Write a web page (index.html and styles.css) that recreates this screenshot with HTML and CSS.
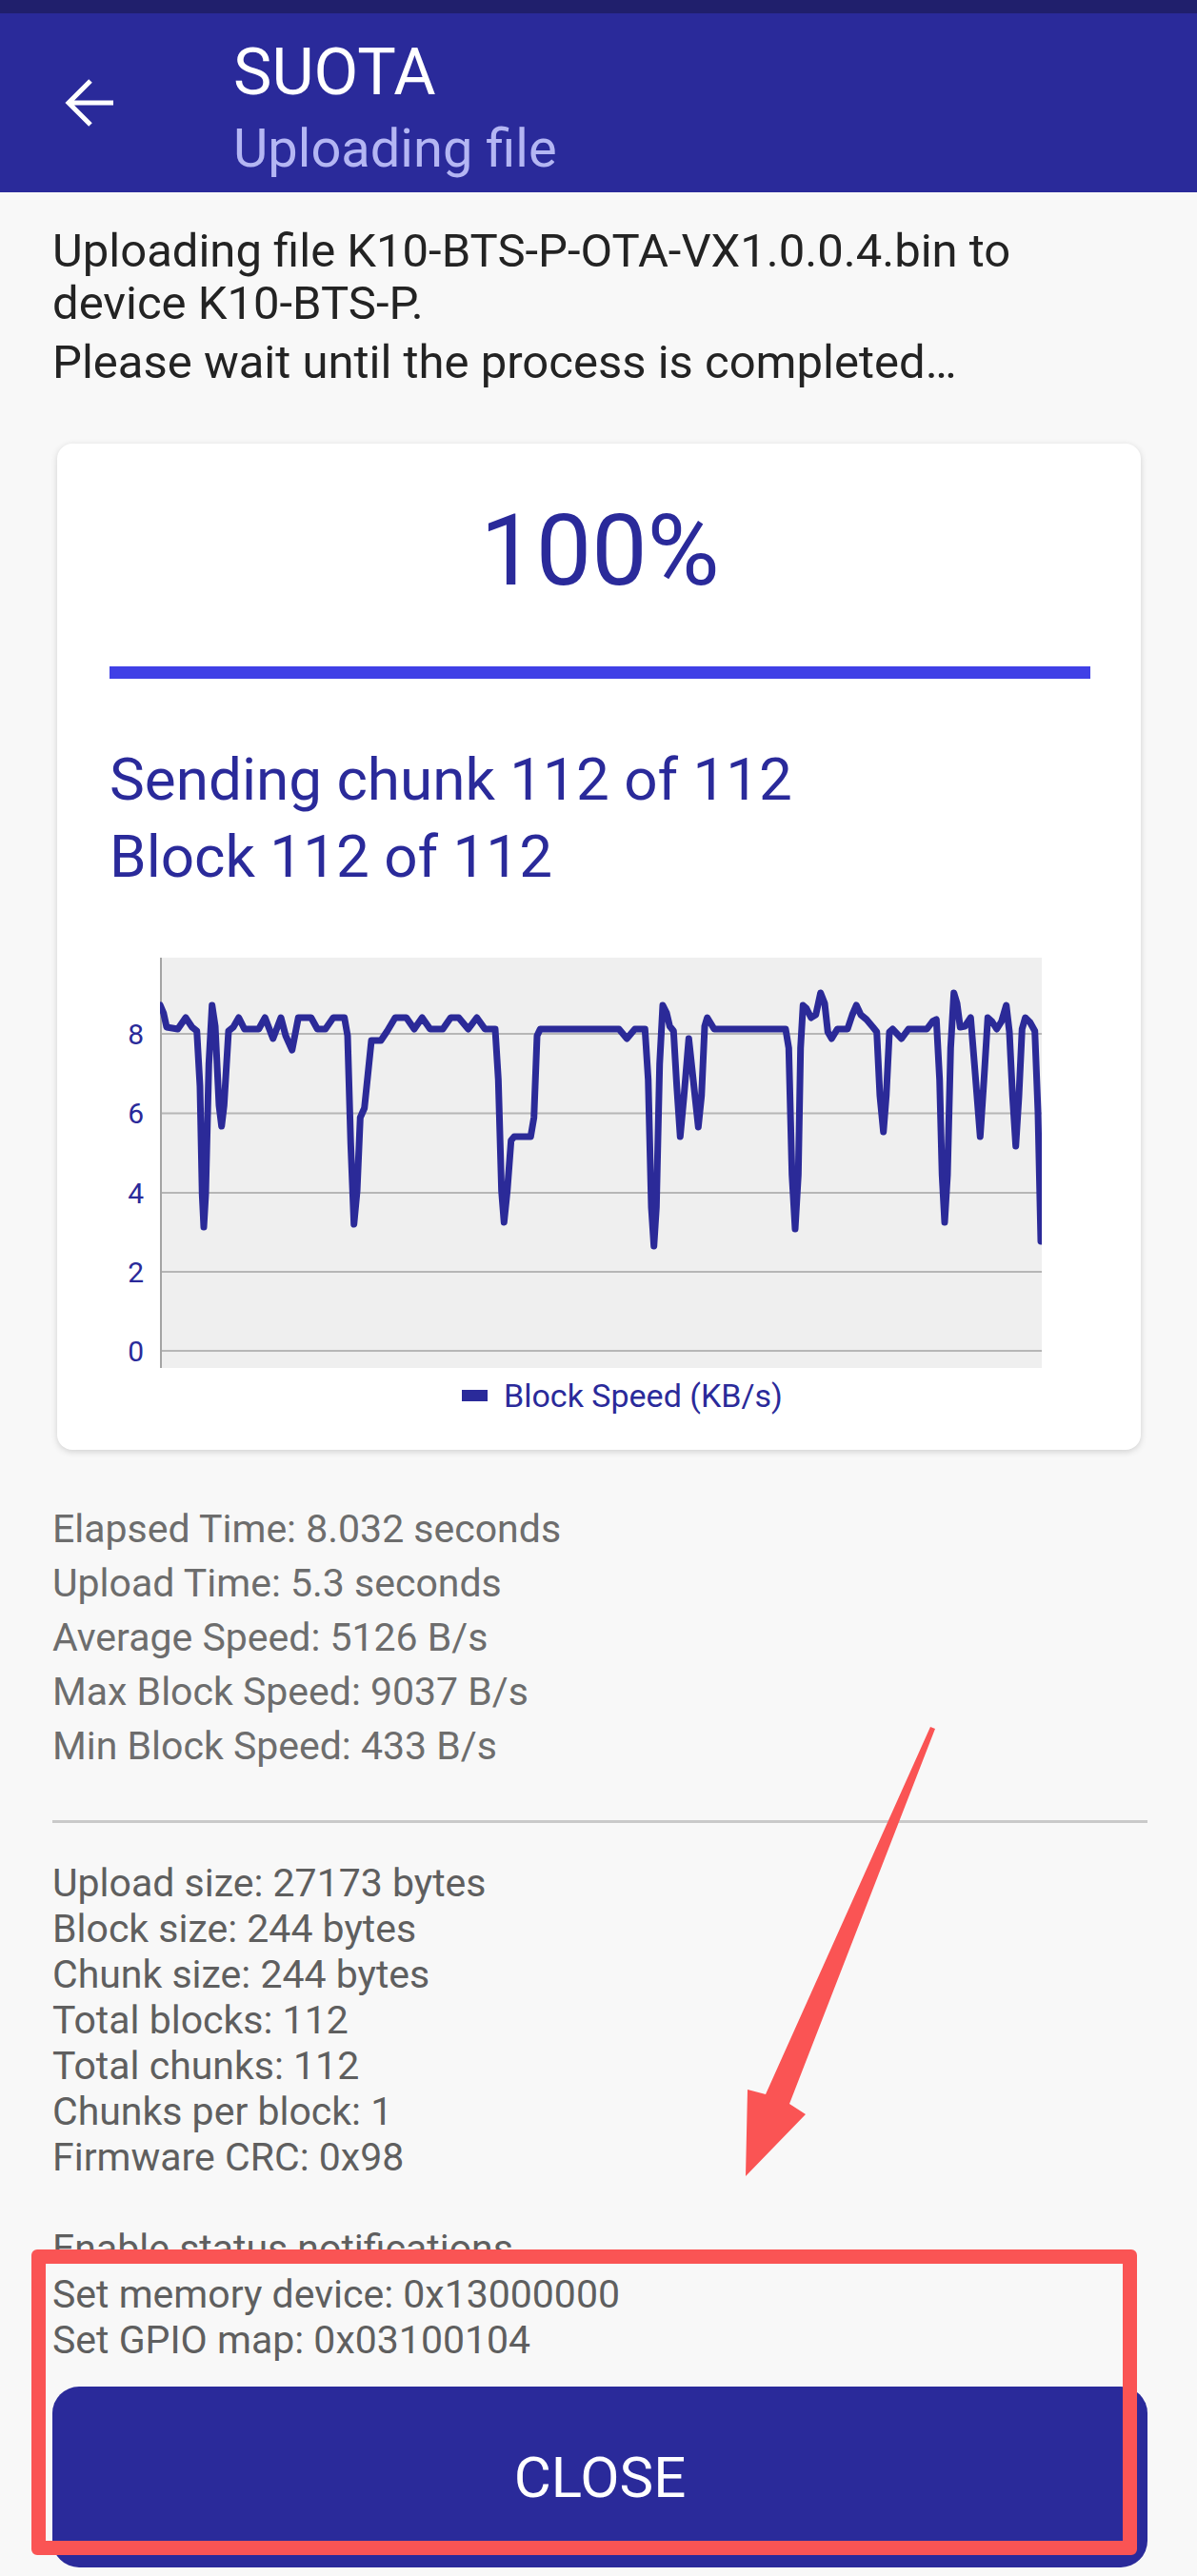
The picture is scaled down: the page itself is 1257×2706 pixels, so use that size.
FILE: index.html
```html
<!DOCTYPE html>
<html lang="en">
<head>
    <meta charset="UTF-8">
    <meta name="viewport" content="width=device-width, initial-scale=1.0">
    <title>SUOTA - Uploading file</title>
    <link rel="stylesheet" href="styles.css">
</head>
<body>
    <div class="status-bar"></div>

    <header class="toolbar">
        <svg class="back" viewBox="0 0 54 54" width="54" height="54">
            <path d="M51 27H5 M27 4 L4 27 L27 50" fill="none" stroke="#fff" stroke-width="5"/>
        </svg>
        <div class="titles">
            <div class="title">SUOTA</div>
            <div class="subtitle">Uploading file</div>
        </div>
    </header>

    <main class="content">
        <p class="intro">Uploading file K10-BTS-P-OTA-VX1.0.0.4.bin to<br>device K10-BTS-P.</p>
        <p class="intro wait">Please wait until the process is completed…</p>

        <section class="card">
            <div class="percent">100%</div>
            <div class="progress"><div class="progress-fill" style="width: 100%"></div></div>
            <div class="chunk-info">Sending chunk 112 of 112<br>Block 112 of 112</div>

            <!-- block speed chart -->
            <svg class="chart" width="979" height="431" viewBox="0 0 979 431">
                <g class="axis-labels">
                    <text x="36" y="91">8</text>
                    <text x="36" y="174">6</text>
                    <text x="36" y="258">4</text>
                    <text x="36" y="341">2</text>
                    <text x="36" y="424">0</text>
                </g>
                <svg x="53" y="0" width="926" height="431" viewBox="0 0 926 431">
                    <rect width="926" height="431" fill="#efefef"/>
                    <g stroke="#b6b6b6" stroke-width="2">
                        <line x1="0" y1="80" x2="926" y2="80"/>
                        <line x1="0" y1="163.5" x2="926" y2="163.5"/>
                        <line x1="0" y1="247" x2="926" y2="247"/>
                        <line x1="0" y1="330" x2="926" y2="330"/>
                        <line x1="0" y1="413" x2="926" y2="413"/>
                    </g>
                    <line x1="1" y1="0" x2="1" y2="431" stroke="#a4a4a4" stroke-width="2"/>
                    <polyline class="speed-line" points="0.3,50 3.7,58 7,73 18.7,75 27,63 33.7,73 38.7,77 42,135 44.3,248 46,283 48,248 51.3,112 54.7,50 58,72 62,155 64.7,177 67.3,155 72,77 77,73 82.7,63 88.7,75 103.7,75 110.3,63 118.7,85 127,63 132,82 138.7,97 145.3,63 158.7,63 165.3,75 173.7,75 182,63 193.7,63 197,82 200.3,195 203.7,280 207,245 210.3,168 214.7,158 222,87 232,87 238.7,77 247,63 258.7,63 267,75 275.3,63 283.7,75 297,75 305.3,63 313.7,63 323.7,75 332.7,63 341.3,75 352,75 355.3,128 358.7,245 361.3,278 364.7,245 368.7,192 372,188 389.3,188 392.7,168 396,82 399.3,75 482,75 490.3,85 498.7,75 509.3,75 512.7,128 516,262 518.7,303 521.3,262 524.7,112 528,50 532,58 535.3,72 539.3,77 542.7,135 546.3,188 550.3,145 555.3,85 559.3,122 565.3,178 568.7,145 572,72 574.7,63 582,75 657,75 660.3,95 663.7,228 667,285 670.3,228 672.7,95 675.3,50 678.7,53 683.7,63 688.7,60 693.7,37 698,48 701.3,78 705.3,85 711.3,75 722,75 727,60 731.3,50 736,60 742,65 748.7,73 752.7,78 756,145 759.7,183 762.7,145 766,78 769.3,75 778.7,85 786,75 805.3,75 811.3,67 815.3,65 818.7,128 821.3,228 824,278 827,228 830.3,95 833.7,37 837,48 840.3,73 845.3,72 851.3,63 855.3,112 861.3,188 865.3,128 869.3,63 873.7,67 878.7,75 883.7,67 888.7,50 892,78 895.3,145 898.7,198 902,145 905.3,75 908.7,63 913.7,68 918.7,77 922,162 925,298"/>
                </svg>
            </svg>

            <div class="legend"><span class="legend-box"></span>Block Speed (KB/s)</div>
        </section>

        <p class="stats">
            Elapsed Time: 8.032 seconds<br>
            Upload Time: 5.3 seconds<br>
            Average Speed: 5126 B/s<br>
            Max Block Speed: 9037 B/s<br>
            Min Block Speed: 433 B/s
        </p>

        <hr class="divider">

        <p class="log">
            Upload size: 27173 bytes<br>
            Block size: 244 bytes<br>
            Chunk size: 244 bytes<br>
            Total blocks: 112<br>
            Total chunks: 112<br>
            Chunks per block: 1<br>
            Firmware CRC: 0x98<br>
            <br>
            Enable status notifications<br>
            Set memory device: 0x13000000<br>
            Set GPIO map: 0x03100104
        </p>

        <button class="close-btn">CLOSE</button>
    </main>

    <!-- red markup drawn over the screenshot -->
    <div class="mark-box"></div>
    <svg class="mark-arrow" width="220" height="500" viewBox="0 0 220 500">
        <polygon points="207,14 212,16 59,410 76,421 13,486 15,395 34,400" fill="#fa5454"/>
    </svg>
</body>
</html>
```

FILE: styles.css
```css
body {
    margin: 0;
    position: relative;
    background-color: #f8f8f8;
    font-family: Roboto, "Liberation Sans", Arial, sans-serif;
}

.status-bar {
    height: 14px;
    background: #201f6c;
}

.toolbar {
    display: flex;
    align-items: center;
    height: 188px;
    background: #2a2a9a;
}
.toolbar .back {
    margin-left: 68px;
    flex-shrink: 0;
}
.titles {
    align-self: flex-start;
    margin-left: 123px;
    padding-top: 24px;
}
.title {
    font-size: 68px;
    line-height: 76px;
    color: #fff;
}
.subtitle {
    margin-top: 10px;
    font-size: 56px;
    line-height: 64px;
    color: #b4b6f3;
}

.content {
    padding: 34px 52px 9px 55px;
}

.intro {
    margin: 0;
    font-size: 49px;
    line-height: 55px;
    color: #232323;
}
.intro.wait {
    margin-top: 7px;
}

/* Card with progress and chart */
.card {
    margin: 58px 7px 0 5px;
    padding: 52px 53px 37px 55px;
    background: #fff;
    border-radius: 16px;
    box-shadow: 0 2px 7px rgba(0, 0, 0, 0.16);
}
.percent {
    font-size: 104px;
    line-height: 122px;
    text-align: center;
    color: #2a2a9a;
}
.progress {
    margin-top: 60px;
    height: 13px;
    background: #dcdcf6;
}
.progress-fill {
    height: 100%;
    background: #4040e6;
}
.chunk-info {
    margin-top: 65px;
    font-size: 62px;
    line-height: 81px;
    color: #2a2a9a;
}
.chart {
    display: block;
    margin-top: 66px;
}
.axis-labels text {
    font-family: Roboto, sans-serif;
    font-size: 30px;
    fill: #2a2a9a;
    text-anchor: end;
}
.speed-line {
    fill: none;
    stroke: #2b2a98;
    stroke-width: 7;
    stroke-linejoin: round;
    stroke-linecap: round;
}
.legend {
    display: flex;
    align-items: center;
    margin-top: 9px;
    padding-left: 370px;
    font-size: 34px;
    line-height: 40px;
    color: #2a2a9a;
}
.legend-box {
    width: 27px;
    height: 12px;
    margin-right: 17px;
    background: #2a2a9a;
}

/* Text logs */
.stats {
    margin: 55px 0 0;
    font-size: 41px;
    line-height: 57px;
    color: #6d6d6d;
}
.divider {
    margin: 49px 0 0;
    border: none;
    border-top: 3px solid #cacaca;
}
.log {
    margin: 39px 0 0;
    font-size: 41px;
    line-height: 48px;
    color: #5f5f5f;
}

.close-btn {
    display: block;
    width: 100%;
    height: 190px;
    margin-top: 25px;
    border: none;
    border-radius: 28px;
    background: #2a2a9a;
    color: #fff;
    font-family: Roboto, sans-serif;
    font-size: 60px;
    cursor: pointer;
}

/* Annotation overlay */
.mark-box {
    position: absolute;
    left: 33px;
    top: 2363px;
    width: 1161px;
    height: 321px;
    box-sizing: border-box;
    border: 15px solid #fa5454;
    border-radius: 6px;
}
.mark-arrow {
    position: absolute;
    left: 770px;
    top: 1800px;
}
```
